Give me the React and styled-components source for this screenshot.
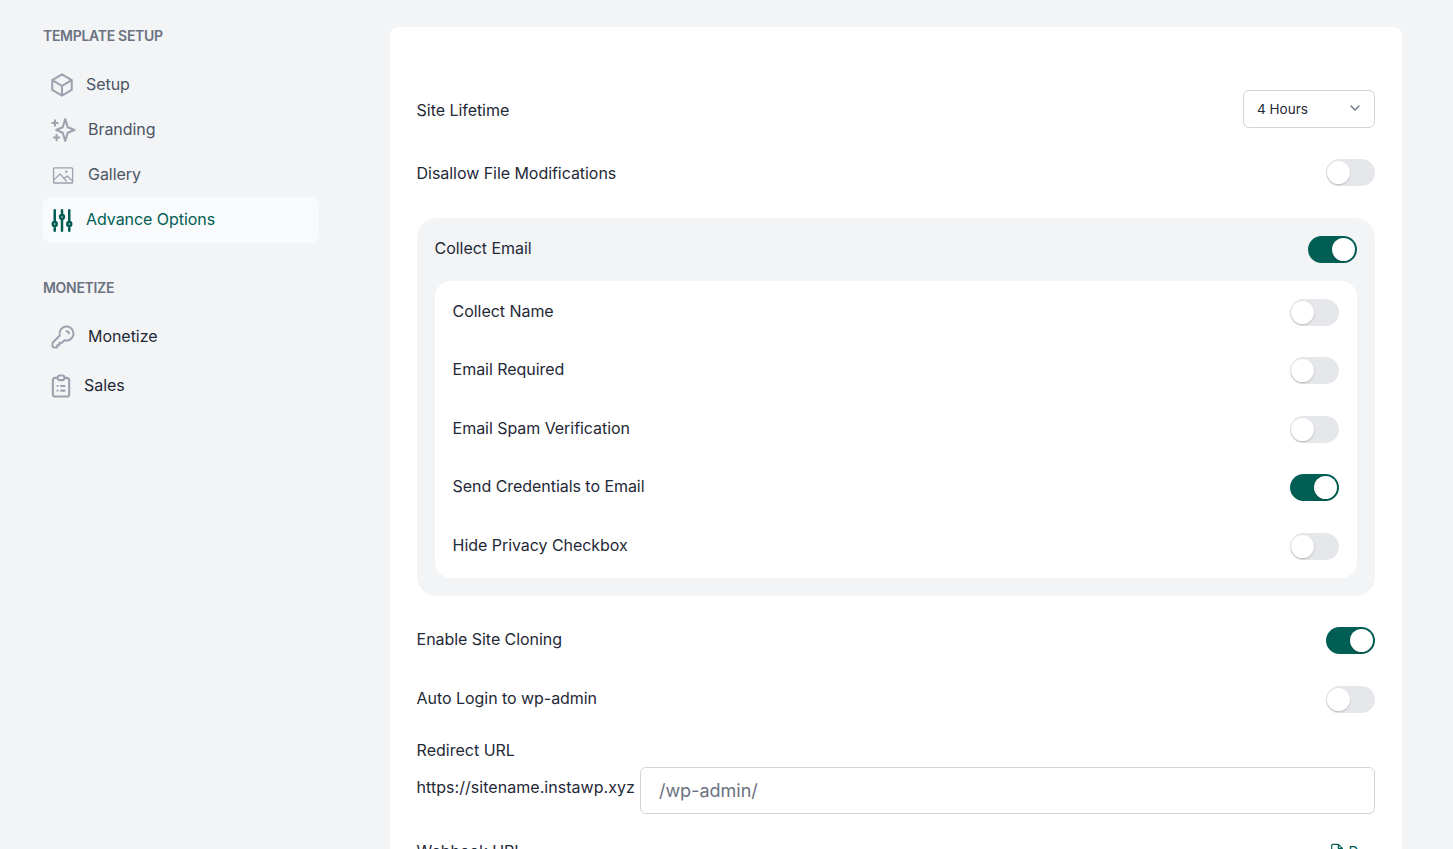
import React from "react";
import styled, { createGlobalStyle } from "styled-components";
import { ChevronDown } from "lucide-react";

const GlobalStyle = createGlobalStyle`
  html, body {
    margin: 0;
    height: 100%;
    overflow: hidden;
    background: #f3f4f6;
  }
  * {
    box-sizing: border-box;
  }
  body {
    font-family: Inter, "Liberation Sans", sans-serif;
    color: #1f2937;
  }
`;

const Page = styled.div`
  display: flex;
  align-items: flex-start;
  height: 849px;
  overflow: hidden;
  padding: 27px 51px 0 43px;
`;

const Sidebar = styled.aside`
  width: 276px;
  flex-shrink: 0;
  margin-right: 71px;
`;

const SectionTitle = styled.h3`
  margin: 0 0 ${(p) => p.$gap}px;
  font-size: 14px;
  line-height: 18px;
  font-weight: 600;
  letter-spacing: -0.3px;
  color: #6b7280;
`;

const NavList = styled.nav`
  display: flex;
  flex-direction: column;
  gap: ${(p) => p.$gap}px;
  margin-bottom: 36px;
`;

const NavItem = styled.a`
  display: flex;
  align-items: center;
  height: ${(p) => p.$height || 45}px;
  padding: 0 0 2px 6px;
  border-radius: 8px;
  font-size: 16px;
  line-height: 24px;
  letter-spacing: -0.05px;
  color: ${(p) => (p.$active ? "#005e54" : p.$dark ? "#1f2937" : "#4b5563")};
  background: ${(p) => (p.$active ? "#f9fafb" : "transparent")};
`;

const IconSlot = styled.span`
  display: flex;
  width: ${(p) => p.$width}px;
  flex-shrink: 0;
  margin-top: 2px;
  color: ${(p) => (p.$active ? "#005e54" : "#9ca3af")};
`;

const Card = styled.main`
  flex: 1;
  height: 900px;
  padding: 63px 27px 0;
  background: #fff;
  border-radius: 8px;
`;

const Row = styled.div`
  display: flex;
  justify-content: space-between;
  align-items: ${(p) => (p.$center ? "center" : "flex-start")};
  margin-bottom: ${(p) => p.$after}px;
`;

const Label = styled.span`
  margin-left: -0.4px;
  font-size: 16px;
  line-height: 24px;
  letter-spacing: -0.05px;
  color: #1f2937;
`;

const SelectLabel = styled(Label)`
  padding-top: 2px;
`;

const SelectBox = styled.div`
  display: flex;
  align-items: center;
  justify-content: space-between;
  width: 132px;
  height: 38px;
  padding: 0 11px 0 13px;
  border: 1px solid #d1d5db;
  border-radius: 6px;
  font-size: 13.5px;
  color: #1f2937;
  svg {
    margin-bottom: 2px;
    color: #6b7280;
  }
`;

const Track = styled.span`
  position: relative;
  display: block;
  flex-shrink: 0;
  width: 49px;
  height: 27px;
  border-radius: 14px;
  background: ${(p) => (p.$on ? "#005e54" : "#e5e7eb")};
`;

const Knob = styled.span`
  position: absolute;
  top: 2px;
  left: ${(p) => (p.$on ? "24px" : "1px")};
  width: 23px;
  height: 23px;
  border-radius: 50%;
  background: #fff;
  box-shadow: 0 1px 2px rgba(0, 0, 0, 0.2);
`;

const Toggle = ({ on }) => (
  <Track $on={on}>
    <Knob $on={on} />
  </Track>
);

const EmailGroup = styled.section`
  padding: 18px;
  margin-bottom: 31px;
  background: #f3f4f6;
  border-radius: 20px;
`;

const EmailList = styled.div`
  display: flex;
  flex-direction: column;
  gap: 31.5px;
  padding: 17.9px 18px 18.1px;
  background: #fff;
  border-radius: 16px;
`;

const ToggleRow = styled.div`
  display: flex;
  justify-content: space-between;
  align-items: flex-start;
  margin-bottom: ${(p) => p.$after || 0}px;
`;

const UrlLabel = styled.div`
  margin: 0 0 5px -0.4px;
  font-size: 16px;
  line-height: 24px;
  color: #1f2937;
`;

const UrlRow = styled.div`
  display: flex;
  align-items: flex-start;
  gap: 5px;
  margin-bottom: 25px;
`;

const UrlPrefix = styled.span`
  margin-left: -0.4px;
  font-size: 16px;
  line-height: 40px;
  letter-spacing: 0.04px;
  white-space: nowrap;
  color: #1f2937;
`;

const UrlInput = styled.input`
  flex: 1;
  min-width: 0;
  height: 47px;
  padding: 0 18px;
  border: 1px solid #d1d5db;
  border-radius: 6px;
  outline: none;
  font-family: inherit;
  font-size: 18px;
  color: #1f2937;
  &::placeholder {
    color: #6b7280;
    opacity: 1;
  }
`;

const DocsLink = styled.span`
  display: flex;
  align-items: center;
  gap: 4px;
  margin-top: 4px;
  font-size: 14px;
  color: #005e54;
`;

const Svg = ({ size = 26, width = 1.7, box = "0 0 24 24", children }) => (
  <svg width={size} height={size} viewBox={box} fill="none" stroke="currentColor" strokeWidth={width} strokeLinecap="round" strokeLinejoin="round" style={{ overflow: "visible" }}>
    {children}
  </svg>
);

const CubeIcon = () => (
  <Svg width={1.9}>
    <path d="m21 7.5-9-5.250L3 7.500m18 0-9 5.250m9-5.250v9l-9 5.250M3 7.500l9 5.250M3 7.500v9l9 5.250m0-9v9" />
  </Svg>
);

const SparkleIcon = () => (
  <Svg width={1.9}>
    <path d="M5.500 3v5M3 5.500h5M7 16.500v5M4.500 19h5M15 2l2.300 7.500 6.200 2.500-6.200 2.500L15 22l-2.300-7.500L6.700 12l6-2.500z" />
  </Svg>
);

const ImageIcon = () => (
  <Svg width={1.2}>
    <rect x="4.200" y="5.500" width="17.600" height="13.900" rx="0.8" />
    <path d="m4.600 16.500 5.600-5.500 5.800 6.500m-2.500-2.500 3.500-2 4.500 4.500" />
    <circle cx="16" cy="9" r="0.5" />
  </Svg>
);

const SlidersIcon = () => (
  <Svg width={2.3}>
    <path d="M5.300 13.900V3m0 10.900a1.800 1.800 0 1 0 0 3.600a1.800 1.800 0 0 0 0-3.600m0 3.600V22M18.700 13.900V3m0 10.900a1.800 1.800 0 1 0 0 3.600a1.800 1.800 0 0 0 0-3.600m0 3.600V22M12 7.400V3m0 4.400a1.800 1.800 0 1 0 0 3.600a1.800 1.800 0 0 0 0-3.600m0 3.600V22" />
  </Svg>
);

const KeyIcon = () => (
  <Svg size={28} width={1.7}>
    <path d="M15 7a2 2 0 0 1 2 2m4 0a6 6 0 0 1-7.743 5.743L11 17H9v2H7v2H4a1 1 0 0 1-1-1v-2.586a1 1 0 0 1 .293-.707l5.964-5.964A6 6 0 1 1 21 9z" />
  </Svg>
);

const ClipboardIcon = () => (
  <Svg size={28} width={1.8} box="1.700 0 24 24">
    <path d="M9 5H7a2 2 0 0 0-2 2v12a2 2 0 0 0 2 2h10a2 2 0 0 0 2-2V7a2 2 0 0 0-2-2h-2M9 5a2 2 0 0 0 2 2h2a2 2 0 0 0 2-2M9 5a2 2 0 0 1 2-2h2a2 2 0 0 1 2 2m-3 7h3m-3 4h3m-6-4h.01M9 16h.01" />
  </Svg>
);

const FileIcon = () => (
  <Svg size={16} width={1.8}>
    <path d="M14 2H6a2 2 0 0 0-2 2v16a2 2 0 0 0 2 2h12a2 2 0 0 0 2-2V8zM14 2v6h6" />
  </Svg>
);

const setupItems = [
  { label: "Setup", icon: <CubeIcon />, slot: 37 },
  { label: "Branding", icon: <SparkleIcon />, slot: 39 },
  { label: "Gallery", icon: <ImageIcon />, slot: 39 },
  { label: "Advance Options", icon: <SlidersIcon />, slot: 37, active: true, height: 46 },
];

const emailOptions = [
  { label: "Collect Name" },
  { label: "Email Required" },
  { label: "Email Spam Verification" },
  { label: "Send Credentials to Email", on: true },
  { label: "Hide Privacy Checkbox" },
];

export default function App() {
  return (
    <>
      <GlobalStyle />
      <Page>
        <Sidebar>
          <SectionTitle $gap={17}>TEMPLATE SETUP</SectionTitle>
          <NavList $gap={0}>
            {setupItems.map((item) => (
              <NavItem key={item.label} $active={item.active} $height={item.height}>
                <IconSlot $width={item.slot} $active={item.active}>{item.icon}</IconSlot>
                {item.label}
              </NavItem>
            ))}
          </NavList>
          <SectionTitle $gap={17}>MONETIZE</SectionTitle>
          <NavList $gap={4}>
            <NavItem $dark>
              <IconSlot $width={39}><KeyIcon /></IconSlot>
              Monetize
            </NavItem>
            <NavItem $dark>
              <IconSlot $width={35}><ClipboardIcon /></IconSlot>
              Sales
            </NavItem>
          </NavList>
        </Sidebar>
        <Card>
          <Row $center $after={31}>
            <SelectLabel>Site Lifetime</SelectLabel>
            <SelectBox>
              4 Hours
              <ChevronDown size={16} />
            </SelectBox>
          </Row>
          <Row $center $after={32}>
            <Label>Disallow File Modifications</Label>
            <Toggle />
          </Row>
          <EmailGroup>
            <ToggleRow $after={18}>
              <Label>Collect Email</Label>
              <Toggle on />
            </ToggleRow>
            <EmailList>
              {emailOptions.map((option) => (
                <ToggleRow key={option.label}>
                  <Label>{option.label}</Label>
                  <Toggle on={option.on} />
                </ToggleRow>
              ))}
            </EmailList>
          </EmailGroup>
          <ToggleRow $after={32}>
            <Label>Enable Site Cloning</Label>
            <Toggle on />
          </ToggleRow>
          <ToggleRow $after={25}>
            <Label>Auto Login to wp-admin</Label>
            <Toggle />
          </ToggleRow>
          <UrlLabel>Redirect URL</UrlLabel>
          <UrlRow>
            <UrlPrefix>https://sitename.instawp.xyz</UrlPrefix>
            <UrlInput placeholder="/wp-admin/" />
          </UrlRow>
          <Row>
            <Label>Webhook URL</Label>
            <DocsLink>
              <FileIcon />
              Doc
            </DocsLink>
          </Row>
        </Card>
      </Page>
    </>
  );
}
